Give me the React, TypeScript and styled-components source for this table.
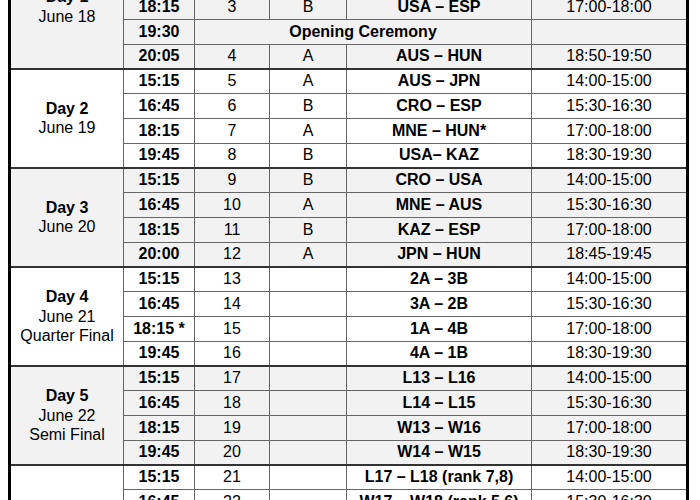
import React from 'react';
import styled, { createGlobalStyle } from 'styled-components';

const GlobalStyle = createGlobalStyle`
  html, body {
    margin: 0;
    padding: 0;
    background: #ffffff;
    overflow: hidden;
  }
  body {
    font-family: "Liberation Sans", Arial, sans-serif;
    color: #000;
  }
`;

const Page = styled.div`
  padding: 0 0 0 8px;
  margin-top: -56px;
`;

const Table = styled.table`
  width: 681px;
  border-collapse: collapse;
  table-layout: fixed;
  border-left: 3px solid #000;
  border-right: 3px solid #000;
  font-size: 16px;
`;

const Row = styled.tr<{ shaded: boolean; first: boolean }>`
  background: ${p => (p.shaded ? '#f2f2f2' : '#ffffff')};
  height: 24.75px;

  & > td {
    border-top: ${p => (p.first ? '2px solid #333' : '1px solid #666')};
  }
`;

const Cell = styled.td<{ bold?: boolean }>`
  border: 1px solid #666;
  padding: 0 2px;
  text-align: center;
  vertical-align: middle;
  font-weight: ${p => (p.bold ? 700 : 400)};
  line-height: 18px;
  white-space: nowrap;
`;

const DayCell = styled.td`
  border: 1px solid #666;
  border-top: 2px solid #333;
  border-bottom: 2px solid #333;
  text-align: center;
  vertical-align: middle;
  line-height: 19.5px;
`;

const DayName = styled.div`
  font-weight: 700;
`;

type Game = {
  time: string;
  no?: string;
  group?: string;
  match: string;
  slot?: string;
  ceremony?: boolean;
};

type Day = { title: string; date: string; note?: string; games: Game[] };

const days: Day[] = [
  {
    title: 'Day 1',
    date: 'June 18',
    games: [
      { time: '15:15', no: '1', group: 'A', match: 'MNE – JPN', slot: '14:00-15:00' },
      { time: '16:45', no: '2', group: 'B', match: 'KAZ – CRO', slot: '15:30-16:30' },
      { time: '18:15', no: '3', group: 'B', match: 'USA – ESP', slot: '17:00-18:00' },
      { time: '19:30', match: 'Opening Ceremony', ceremony: true },
      { time: '20:05', no: '4', group: 'A', match: 'AUS – HUN', slot: '18:50-19:50' },
    ],
  },
  {
    title: 'Day 2',
    date: 'June 19',
    games: [
      { time: '15:15', no: '5', group: 'A', match: 'AUS – JPN', slot: '14:00-15:00' },
      { time: '16:45', no: '6', group: 'B', match: 'CRO – ESP', slot: '15:30-16:30' },
      { time: '18:15', no: '7', group: 'A', match: 'MNE – HUN*', slot: '17:00-18:00' },
      { time: '19:45', no: '8', group: 'B', match: 'USA– KAZ', slot: '18:30-19:30' },
    ],
  },
  {
    title: 'Day 3',
    date: 'June 20',
    games: [
      { time: '15:15', no: '9', group: 'B', match: 'CRO – USA', slot: '14:00-15:00' },
      { time: '16:45', no: '10', group: 'A', match: 'MNE – AUS', slot: '15:30-16:30' },
      { time: '18:15', no: '11', group: 'B', match: 'KAZ – ESP', slot: '17:00-18:00' },
      { time: '20:00', no: '12', group: 'A', match: 'JPN – HUN', slot: '18:45-19:45' },
    ],
  },
  {
    title: 'Day 4',
    date: 'June 21',
    note: 'Quarter Final',
    games: [
      { time: '15:15', no: '13', match: '2A – 3B', slot: '14:00-15:00' },
      { time: '16:45', no: '14', match: '3A – 2B', slot: '15:30-16:30' },
      { time: '18:15 *', no: '15', match: '1A – 4B', slot: '17:00-18:00' },
      { time: '19:45', no: '16', match: '4A – 1B', slot: '18:30-19:30' },
    ],
  },
  {
    title: 'Day 5',
    date: 'June 22',
    note: 'Semi Final',
    games: [
      { time: '15:15', no: '17', match: 'L13 – L16', slot: '14:00-15:00' },
      { time: '16:45', no: '18', match: 'L14 – L15', slot: '15:30-16:30' },
      { time: '18:15', no: '19', match: 'W13 – W16', slot: '17:00-18:00' },
      { time: '19:45', no: '20', match: 'W14 – W15', slot: '18:30-19:30' },
    ],
  },
  {
    title: 'Day 6',
    date: 'June 23',
    note: 'Final',
    games: [
      { time: '15:15', no: '21', match: 'L17 – L18 (rank 7,8)', slot: '14:00-15:00' },
      { time: '16:45', no: '22', match: 'W17 – W18 (rank 5,6)', slot: '15:30-16:30' },
      { time: '18:15', no: '23', match: 'L19 – L20 (rank 3,4)', slot: '17:00-18:00' },
      { time: '19:45', no: '24', match: 'W19 – W20 (rank 1,2)', slot: '18:30-19:30' },
      { time: '21:00', match: 'Closing Ceremony', ceremony: true },
      { time: '21:30', match: 'Award Ceremony', ceremony: true },
    ],
  },
];

const App: React.FC = () => (
  <Page>
    <GlobalStyle />
    <Table>
      <colgroup>
        <col style={{ width: 114 }} />
        <col style={{ width: 71 }} />
        <col style={{ width: 75 }} />
        <col style={{ width: 77 }} />
        <col style={{ width: 185 }} />
        <col style={{ width: 156 }} />
      </colgroup>
      <tbody>
        {days.map((day, d) =>
          day.games.map((g, i) => (
            <Row key={`${d}-${i}`} shaded={d % 2 === 0} first={i === 0}>
              {i === 0 && (
                <DayCell rowSpan={day.games.length}>
                  <DayName>{day.title}</DayName>
                  <div>{day.date}</div>
                  {day.note && <div>{day.note}</div>}
                </DayCell>
              )}
              <Cell bold>{g.time}</Cell>
              {g.ceremony ? (
                <>
                  <Cell bold colSpan={3}>{g.match}</Cell>
                  <Cell />
                </>
              ) : (
                <>
                  <Cell>{g.no}</Cell>
                  <Cell>{g.group}</Cell>
                  <Cell bold>{g.match}</Cell>
                  <Cell>{g.slot}</Cell>
                </>
              )}
            </Row>
          ))
        )}
      </tbody>
    </Table>
  </Page>
);

export default App;
